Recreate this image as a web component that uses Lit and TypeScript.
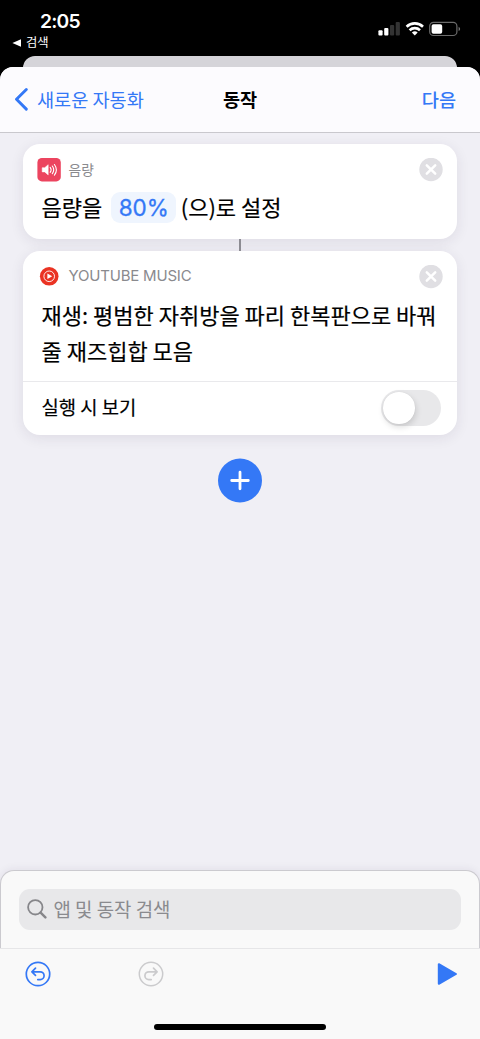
import { LitElement, html, css, svg } from "lit";
import { customElement, property, state } from "lit/decorators.js";

const closeIcon = html`<svg class="close" width="24" height="24" viewBox="0 0 24 24">
  <circle cx="12" cy="11.500" r="11.700" fill="#e0dfe3" />
  <path d="M7.800 7.300l8.400 8.400M16.200 7.300l-8.400 8.400" stroke="#fff" stroke-width="2.500" stroke-linecap="round" />
</svg>`;

const turnArrow = svg`<path d="M10.500 7.200L6.900 10.800L10.500 14.400M7.200 10.800H15.200a3.900 3.900 0 0 1 0 7.800H12.800"
  fill="none" stroke="currentColor" stroke-width="1.700" stroke-linecap="round" stroke-linejoin="round" />`;

@customElement("status-bar")
class StatusBar extends LitElement {
  static styles = css`
    :host { display: flex; justify-content: space-between; height: 56px; color: #fff; box-sizing: border-box; }
    .left { padding: 10px 0 0 12px; }
    .time { font: 600 19.300px/22px Inter, sans-serif; padding-left: 28px; letter-spacing: -.800px; }
    .back { display: flex; align-items: center; gap: 5px; font: 400 12.300px/18px "Noto Sans CJK KR", sans-serif; margin-top: 1px; }
    .back svg { margin-top: 2px; }
    .right { display: flex; align-items: flex-start; padding: 21px 19px 0 0; }
    svg { display: block; }
  `;
  render() {
    return html`
      <div class="left">
        <div class="time">2:05</div>
        <div class="back">
          <svg width="9" height="8" viewBox="0 0 9 8"><path d="M.4 4L9 .2V7.8z" fill="#fff" /></svg>
          <span>검색</span>
        </div>
      </div>
      <div class="right">
        <svg width="83" height="16" viewBox="0 0 83 16">
          <rect x=".4" y="9.300" width="4.200" height="5.200" rx="1" fill="#fff" />
          <rect x="6.200" y="7" width="4.200" height="7.500" rx="1" fill="#fff" />
          <rect x="12" y="4" width="4.200" height="10.500" rx="1" fill="#333" />
          <rect x="17.700" y="1" width="4.200" height="13.500" rx="1" fill="#333" />
          <g fill="none" stroke="#fff" stroke-width="2.600">
            <path d="M28.600 5.700a11.800 11.800 0 0 1 16.400 0" />
            <path d="M31.600 9.200a7.500 7.500 0 0 1 10.400 0" />
          </g>
          <path d="M36.800 14.600l-2.900-3a4.200 4.200 0 0 1 5.800 0z" fill="#fff" />
          <rect x="51.700" y="1.300" width="27.200" height="13.200" rx="3.800" fill="none" stroke="#6b6b6b" stroke-width="1.200" />
          <rect x="53.600" y="3.200" width="10.600" height="9.500" rx="1.800" fill="#fff" />
          <path d="M80.600 5.800c2 .8 2 3.500 0 4.300z" fill="#777" />
        </svg>
      </div>`;
  }
}

@customElement("toggle-switch")
class ToggleSwitch extends LitElement {
  @property({ type: Boolean }) on = false;
  static styles = css`
    :host { display: block; }
    .track { width: 59.500px; height: 36px; border-radius: 18px; background: #e8e8ea; box-sizing: border-box; padding: 2.300px; display: flex; }
    .track.on { background: #34c759; justify-content: flex-end; }
    .knob { width: 31.400px; height: 31.400px; border-radius: 50%; background: #fff; box-shadow: 1px 3px 6px rgba(0,0,0,.14), 0 0 1px rgba(0,0,0,.1); }
  `;
  render() {
    return html`<div class="track ${this.on ? "on" : ""}" @click=${() => (this.on = !this.on)}><div class="knob"></div></div>`;
  }
}

@customElement("app-root")
class AppRoot extends LitElement {
  @state() private volume = 80;

  static styles = css`
    :host { display: flex; flex-direction: column; height: 1039px; background: #000; overflow: hidden;
      font-family: "Noto Sans CJK KR", sans-serif; color: #000; }
    * { box-sizing: border-box; }
    svg { display: block; flex: none; }
    .behind { height: 12px; margin: 0 23.500px 0 23px; background: #d5d4d9; border-radius: 12px 12px 0 0; flex: none; }
    .sheet { flex: 1; display: flex; flex-direction: column; background: #f0eff5; border-radius: 13px 13px 0 0; overflow: hidden; margin-top: -.600px; }
    .nav { height: 65.100px; flex: none; display: grid; grid-template-columns: 1fr auto 1fr; align-items: center;
      background: #fcfbfe; border-bottom: 1px solid #c9c8cd; padding: 0 24px 1.500px 14px; font-size: 18.600px; line-height: 28px; }
    .link { color: #3478f6; display: flex; align-items: center; gap: 9px; white-space: nowrap; }
    .title { font-weight: 600; padding-left: 10px; }
    .next { justify-self: end; font-weight: 500; }
    .body { flex: 1; padding: 11px 23px 0; display: flex; flex-direction: column; align-items: center; }
    .card { align-self: stretch; background: #fff; border-radius: 17px; box-shadow: 0 3px 14px rgba(40,30,70,.09); }
    .volume { height: 95px; }
    .head { display: flex; align-items: center; padding: 14px 14px 0 13.500px; height: 38px; color: #8a8a8e; font-size: 13.800px; }
    .head .name { flex: 1; padding-left: 8px; line-height: 20px; margin-top: -2px; }
    .head .latin { font: 400 15px/20px Inter, sans-serif; letter-spacing: -.200px; }
    .line, .text, .row span { -webkit-text-stroke: .200px #000; }
    .line { display: flex; align-items: center; padding: 10px 0 0 18.500px; font-size: 22px; line-height: 30px; white-space: nowrap; }
    .line .word { margin-top: -2px; }
    .pill { font: 400 22.500px/31px Inter, sans-serif; color: #3478f6; background: #eff5fe; border-radius: 9px; width: 65px;
      text-align: center; margin: 0 4.500px 0 9px; -webkit-text-stroke: .300px #3478f6; }
    .joint { width: 2px; height: 12px; background: #8c8b92; position: relative; z-index: 1; }
    .music { height: 184.500px; }
    .text { padding: 7px 0 0 18.500px; font-size: 22px; line-height: 36px; height: 92px; white-space: nowrap; }
    .row { border-top: 1.300px solid #e9e9ec; height: 54px; display: flex; align-items: center; justify-content: space-between;
      padding: 0 16.500px 0 18.500px; font-size: 18.800px; }
    .row span { margin-top: -4px; }
    .add { margin-top: 23px; }
    .panel { height: 78.500px; flex: none; background: #f9f9f9; border: 1px solid #cbcacf; border-bottom: 0; border-radius: 14px 14px 0 0;
      padding: 18px 18px 0; box-shadow: 0 -1px 8px rgba(40,30,70,.07); }
    .search { height: 41.500px; border-radius: 11px; background: #e8e8ea; color: #8a8a8e; display: flex; align-items: center;
      padding-left: 8px; gap: 6.500px; font-size: 18.900px; }
    .search span { margin-top: -1.500px; }
    .tools { height: 91px; flex: none; background: #f9f9f9; border-top: 1px solid #e6e6e8; display: flex; flex-direction: column; }
    .icons { display: flex; padding: 12px 22.500px 0 24.500px; align-items: center; color: #3478f6; }
    .redo { color: #cbcbcd; margin-left: 87px; transform: scaleX(-1); }
    .play { margin-left: auto; }
    .home { width: 172px; height: 6.500px; border-radius: 4px; background: #000; margin: auto auto 9px; }
  `;

  render() {
    return html`
      <status-bar></status-bar>
      <div class="behind"></div>
      <div class="sheet">
        <div class="nav">
          <div class="link">
            <svg width="14" height="24" viewBox="0 0 14 24"><path d="M12.300 2.500L2.500 12.300l9.800 9.800" fill="none" stroke="#3478f6" stroke-width="2.900" stroke-linecap="round" stroke-linejoin="round" /></svg>
            <span>새로운 자동화</span>
          </div>
          <div class="title">동작</div>
          <div class="link next">다음</div>
        </div>
        <div class="body">
          <div class="card volume">
            <div class="head">
              <svg width="24" height="24" viewBox="0 0 24 24">
                <rect x=".4" y="0" width="23.400" height="23.400" rx="4.500" fill="#ec445f" />
                <path d="M5.200 9.700h2.500L11.200 6.700v10.200l-3.500-3H5.200z" fill="#fff" stroke="#fff" stroke-width=".5" stroke-linejoin="round" />
                <path d="M13.200 9.400a4 4 0 0 1 0 4.900M15.300 8a6.500 6.500 0 0 1 0 7.700M17.400 6.500a9 9 0 0 1 0 10.700" fill="none" stroke="#fff" stroke-width="1.100" stroke-linecap="round" />
              </svg>
              <span class="name">음량</span>
              ${closeIcon}
            </div>
            <div class="line"><span class="word">음량을</span><span class="pill">${this.volume}%</span><span class="word">(으)로 설정</span></div>
          </div>
          <div class="joint"></div>
          <div class="card music">
            <div class="head">
              <svg width="24" height="24" viewBox="0 0 24 24">
                <circle cx="12.200" cy="11.300" r="9.300" fill="#ea3323" />
                <circle cx="12.200" cy="11.300" r="5.300" fill="none" stroke="#fff" stroke-width=".9" />
                <path d="M10.400 8.500L15.200 11.300L10.400 14.100z" fill="#fff" />
              </svg>
              <span class="name latin">YOUTUBE MUSIC</span>
              ${closeIcon}
            </div>
            <div class="text">재생: 평범한 자취방을 파리 한복판으로 바꿔<br />줄 재즈힙합 모음</div>
            <div class="row"><span>실행 시 보기</span><toggle-switch></toggle-switch></div>
          </div>
          <svg class="add" width="44" height="45" viewBox="0 0 44 45">
            <circle cx="22" cy="22.500" r="22" fill="#3478f6" />
            <path d="M22 14.200v16.600M13.700 22.500h16.600" stroke="#fff" stroke-width="2.800" stroke-linecap="round" />
          </svg>
        </div>
        <div class="panel">
          <div class="search">
            <svg width="20" height="20" viewBox="0 0 20 20"><circle cx="8.300" cy="8.300" r="7.200" fill="none" stroke="#86868a" stroke-width="1.800" /><path d="M13.600 13.600l4.800 4.800" stroke="#86868a" stroke-width="2.400" stroke-linecap="round" /></svg>
            <span>앱 및 동작 검색</span>
          </div>
        </div>
        <div class="tools">
          <div class="icons">
            <svg width="26" height="26" viewBox="0 0 26 26"><circle cx="13" cy="13" r="11.700" fill="none" stroke="currentColor" stroke-width="1.700" />${turnArrow}</svg>
            <svg class="redo" width="26" height="26" viewBox="0 0 26 26"><circle cx="13" cy="13" r="11.700" fill="none" stroke="currentColor" stroke-width="1.500" />${turnArrow}</svg>
            <svg class="play" width="21" height="24" viewBox="0 0 21 24"><path d="M1.800 2.200v19.600L19 12z" fill="#3478f6" stroke="#3478f6" stroke-width="2" stroke-linejoin="round" /></svg>
          </div>
          <div class="home"></div>
        </div>
      </div>`;
  }
}
